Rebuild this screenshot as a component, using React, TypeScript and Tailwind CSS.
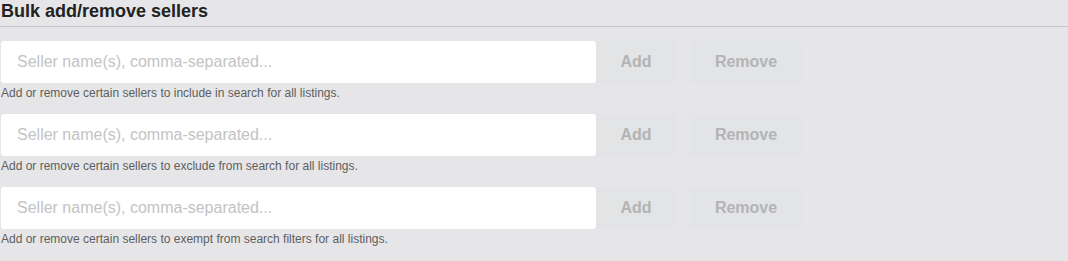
import React from "react";

const rows = [
  "Add or remove certain sellers to include in search for all listings.",
  "Add or remove certain sellers to exclude from search for all listings.",
  "Add or remove certain sellers to exempt from search filters for all listings.",
];

export default function App() {
  return (
    <div className="w-[1068px] h-[261px] bg-[#e6e6e8] font-['Liberation_Sans',Arial,sans-serif] overflow-hidden">
      <div className="border-b border-[#c4c4c6] pt-[1px] pb-[5px]">
        <h2 className="text-[18px] leading-[20px] font-bold text-[#222] pl-[1px]">Bulk add/remove sellers</h2>
      </div>
      <div className="flex flex-col gap-[13px] mt-[14px]">
        {rows.map((t) => (
          <div key={t} className="flex flex-col">
            <div className="flex items-stretch h-[42px]">
              <input
                className="w-[595px] ml-[1px] h-[42px] bg-white rounded-[3px] px-[16px] text-[16px] text-[#333] placeholder:text-[#c3c3c5] outline-none"
                placeholder="Seller name(s), comma-separated..."
              />
              <button className="w-[80px] h-[42px] rounded-[3px] bg-[#e3e4e6] text-[16px] font-bold text-[#b3b3b5]">Add</button>
              <button className="ml-[14px] w-[112px] h-[42px] rounded-[3px] bg-[#e3e4e6] text-[16px] font-bold text-[#b3b3b5]">Remove</button>
            </div>
            <p className="text-[12px] leading-[16px] mt-[2px] text-[#5e5e5e] pl-[1px]">{t}</p>
          </div>
        ))}
      </div>
    </div>
  );
}
